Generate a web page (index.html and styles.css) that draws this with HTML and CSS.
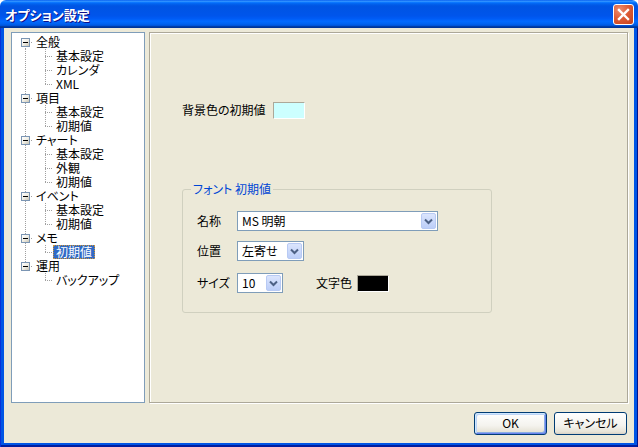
FILE: index.html
```html
<!DOCTYPE html>
<html lang="ja">
	<head>
		<meta charset="utf-8" />
		<title>オプション設定</title>
		<link rel="stylesheet" href="styles.css">
	</head>
	<body>
		<div class="window">
			<div class="titlebar">
				<span class="title">オプション設定</span>
				<div class="close">
					<svg width="19" height="19" viewBox="0 0 19 19">
						<path d="M5 5 L14 14 M14 5 L5 14" stroke="#fff" stroke-width="2.4" stroke-linecap="square" fill="none" />
					</svg>
				</div>
			</div>
			<div class="frame">
				<div class="content">
					<div class="main">
						<div class="tree">
							<div class="row"><span class="a first"><i class="box"></i></span><span class="label">全般</span></div>
							<div class="row"><span class="a pass"></span><span class="b tee"></span><span class="label">基本設定</span></div>
							<div class="row"><span class="a pass"></span><span class="b tee"></span><span class="label">カレンダ</span></div>
							<div class="row"><span class="a pass"></span><span class="b elbow"></span><span class="label">XML</span></div>
							<div class="row"><span class="a mid"><i class="box"></i></span><span class="label">項目</span></div>
							<div class="row"><span class="a pass"></span><span class="b tee"></span><span class="label">基本設定</span></div>
							<div class="row"><span class="a pass"></span><span class="b elbow"></span><span class="label">初期値</span></div>
							<div class="row"><span class="a mid"><i class="box"></i></span><span class="label">チャート</span></div>
							<div class="row"><span class="a pass"></span><span class="b tee"></span><span class="label">基本設定</span></div>
							<div class="row"><span class="a pass"></span><span class="b tee"></span><span class="label">外観</span></div>
							<div class="row"><span class="a pass"></span><span class="b elbow"></span><span class="label">初期値</span></div>
							<div class="row"><span class="a mid"><i class="box"></i></span><span class="label">イベント</span></div>
							<div class="row"><span class="a pass"></span><span class="b tee"></span><span class="label">基本設定</span></div>
							<div class="row"><span class="a pass"></span><span class="b elbow"></span><span class="label">初期値</span></div>
							<div class="row"><span class="a mid"><i class="box"></i></span><span class="label">メモ</span></div>
							<div class="row"><span class="a pass"></span><span class="b elbow"></span><span class="label selected">初期値</span></div>
							<div class="row"><span class="a end"><i class="box"></i></span><span class="label">運用</span></div>
							<div class="row"><span class="a"></span><span class="b elbow"></span><span class="label">バックアップ</span></div>
						</div>

						<div class="panel">
							<div class="bg-row">
								<span class="bg-label">背景色の初期値</span>
								<span class="swatch cyan"></span>
							</div>

							<fieldset class="group">
								<legend>フォント 初期値</legend>
								<div class="field name-row">
									<span class="field-label">名称</span>
									<div class="combo w-name">
										<span class="value">MS 明朝</span>
										<span class="drop"><svg width="15" height="16" viewBox="0 0 15 16"><path d="M4 6.5 L7.5 10 L11 6.5" stroke="#4d6185" stroke-width="2" fill="none" /></svg></span>
									</div>
								</div>
								<div class="field pos-row">
									<span class="field-label">位置</span>
									<div class="combo w-pos">
										<span class="value">左寄せ</span>
										<span class="drop"><svg width="15" height="16" viewBox="0 0 15 16"><path d="M4 6.5 L7.5 10 L11 6.5" stroke="#4d6185" stroke-width="2" fill="none" /></svg></span>
									</div>
								</div>
								<div class="field">
									<span class="field-label">サイズ</span>
									<div class="combo w-size">
										<span class="value">10</span>
										<span class="drop"><svg width="15" height="16" viewBox="0 0 15 16"><path d="M4 6.5 L7.5 10 L11 6.5" stroke="#4d6185" stroke-width="2" fill="none" /></svg></span>
									</div>
									<span class="color-label">文字色</span>
									<span class="swatch black"></span>
								</div>
							</fieldset>
						</div>
					</div>

					<div class="buttons">
						<button class="btn default">OK</button>
						<button class="btn">キャンセル</button>
					</div>
				</div>
			</div>
		</div>
	</body>
</html>
```

FILE: styles.css
```css
* { box-sizing: border-box; }

body {
	margin: 0;
	font: 12px/1.2 "Noto Sans CJK JP", "Liberation Sans", sans-serif;
	font-feature-settings: "palt" 1;
	color: #000;
}

.window {
	width: 638px;
	height: 447px;
	display: flex;
	flex-direction: column;
}

/* title bar */
.titlebar {
	height: 28px;
	flex: none;
	display: flex;
	align-items: center;
	justify-content: space-between;
	padding: 0 4px 0 5px;
	border-radius: 6px 6px 0 0;
	background: linear-gradient(to bottom,
		#0058ee 0%, #3593ff 4%, #288eff 6%, #127dff 8%, #036ffc 10%,
		#0262ee 14%, #0057e5 20%, #0054e3 24%, #0055eb 56%, #005bf5 66%,
		#026afe 76%, #0062ef 86%, #0052d6 92%, #0040ab 94%, #003092 100%);
}

.title {
	color: #fff;
	font-weight: bold;
	font-size: 13px;
	text-shadow: 1px 1px #0f1089;
	padding-top: 1px;
}

.close {
	width: 21px;
	height: 21px;
	border: 1px solid #fff;
	border-radius: 3px;
	background: radial-gradient(circle at 30% 25%, #ec8c6f 0%, #dd5d38 45%, #c5401a 100%);
	display: flex;
	align-items: center;
	justify-content: center;
}

/* frame */
.frame {
	flex: 1;
	display: flex;
	padding: 0 4px 4px;
	background: #0055e5;
	box-shadow: inset 1px 0 #0831d9, inset -1px 0 #00138c, inset 0 -2px #001ea0, inset 0 -1px #00138c;
}

.content {
	flex: 1;
	display: flex;
	flex-direction: column;
	background: #ece9d8;
	padding: 4px 6px 8px 7px;
}

.main {
	flex: 1;
	display: flex;
	gap: 4px;
}

/* tree */
.tree {
	width: 134px;
	flex: none;
	background: #fff;
	border: 1px solid #7f9db9;
	padding-top: 2px;
}

.row {
	display: flex;
	height: 14px;
	align-items: center;
}

.a, .b {
	flex: none;
	height: 14px;
	display: flex;
	align-items: center;
	background-repeat: no-repeat;
}

.a { width: 21px; }
.b { width: 20px; }

.a.pass {
	background-image: repeating-linear-gradient(#a0a0a0 0 1px, transparent 1px 2px);
	background-size: 1px 14px;
	background-position: 13px 0;
}

.a.first, .a.mid, .a.end {
	background-image:
		repeating-linear-gradient(#a0a0a0 0 1px, transparent 1px 2px),
		repeating-linear-gradient(to right, #a0a0a0 0 1px, transparent 1px 2px);
	background-position: 13px 7px, 19px 7px;
	background-size: 1px 7px, 3px 1px;
}

.a.mid { background-position: 13px 0, 19px 7px; background-size: 1px 14px, 3px 1px; }
.a.end { background-position: 13px 0, 19px 7px; background-size: 1px 7px, 3px 1px; }

.box {
	display: block;
	width: 9px;
	height: 9px;
	margin-left: 9px;
	border: 1px solid #7b95b3;
	background:
		linear-gradient(#000, #000) center / 5px 1px no-repeat,
		linear-gradient(135deg, #ffffff 0%, #f1efe6 50%, #c9c4b4 100%);
}

.b.tee, .b.elbow {
	background-image:
		repeating-linear-gradient(#a0a0a0 0 1px, transparent 1px 2px),
		repeating-linear-gradient(to right, #a0a0a0 0 1px, transparent 1px 2px);
	background-position: 12px 0, 12px 7px;
	background-size: 1px 14px, 8px 1px;
}

.b.elbow { background-size: 1px 7px, 8px 1px; }

.label {
	height: 14px;
	line-height: 12px;
	padding: 0 2px;
	border: 1px solid transparent;
	white-space: nowrap;
}

.label.selected {
	background: #316ac5;
	color: #fff;
	border: 1px dotted #ce953a;
}

/* right panel */
.panel {
	flex: 1;
	border: 1px solid #aca899;
	box-shadow: inset 1px 1px #fff, 1px 1px #fff;
	padding: 69px 0 0 32px;
}

.bg-row {
	display: flex;
	align-items: center;
	height: 17px;
}

.bg-label { width: 91px; flex: none; white-space: nowrap; }

.swatch {
	display: block;
	width: 32px;
	height: 17px;
	border: 1px solid;
	border-color: #aca899 #fff #fff #aca899;
}

.swatch.cyan { background: #ccffff; }
.swatch.black { background: #000; }

.group {
	margin: 63px 0 0;
	width: 310px;
	border: 1px solid #d0d0bf;
	border-radius: 3px;
	padding: 15px 0 19px 14px;
}

.group legend {
	color: #0046d5;
	line-height: 14px;
	padding: 0 2px;
	margin-left: -6px;
}

.field {
	display: flex;
	align-items: center;
	height: 20px;
}

.name-row { margin-bottom: 10px; }
.pos-row { margin-bottom: 12px; }

.field-label { width: 40px; flex: none; }

.combo {
	height: 20px;
	display: flex;
	align-items: center;
	background: #fff;
	border: 1px solid #7f9db9;
	padding-right: 1px;
}

.w-name { width: 201px; }
.w-pos { width: 67px; }
.w-size { width: 46px; }

.combo .value {
	flex: 1;
	padding-left: 4px;
	white-space: nowrap;
}

.drop {
	width: 15px;
	height: 16px;
	display: flex;
	border: 1px solid #b8caf4;
	border-radius: 2px;
	background: linear-gradient(#dbe5fd, #bccef8);
}

.drop svg { margin: -1px; }

.color-label {
	margin-left: 33px;
	margin-right: 5px;
}

/* buttons */
.buttons {
	display: flex;
	justify-content: flex-end;
	gap: 7px;
	margin-top: 9px;
	padding-right: 1px;
}

.btn {
	width: 73px;
	height: 23px;
	font: inherit;
	color: #000;
	padding: 0;
	border: 1px solid #003c74;
	border-radius: 3px;
	background: linear-gradient(#ffffff 0%, #f4f3ee 60%, #e6e3d6 90%, #d6d0c5 100%);
}

.btn.default {
	box-shadow: inset 1px 1px #cee7ff, inset -1px -1px #6982ee, inset 2px 2px #bcd4f6, inset -2px -2px #89ade4;
}
```
